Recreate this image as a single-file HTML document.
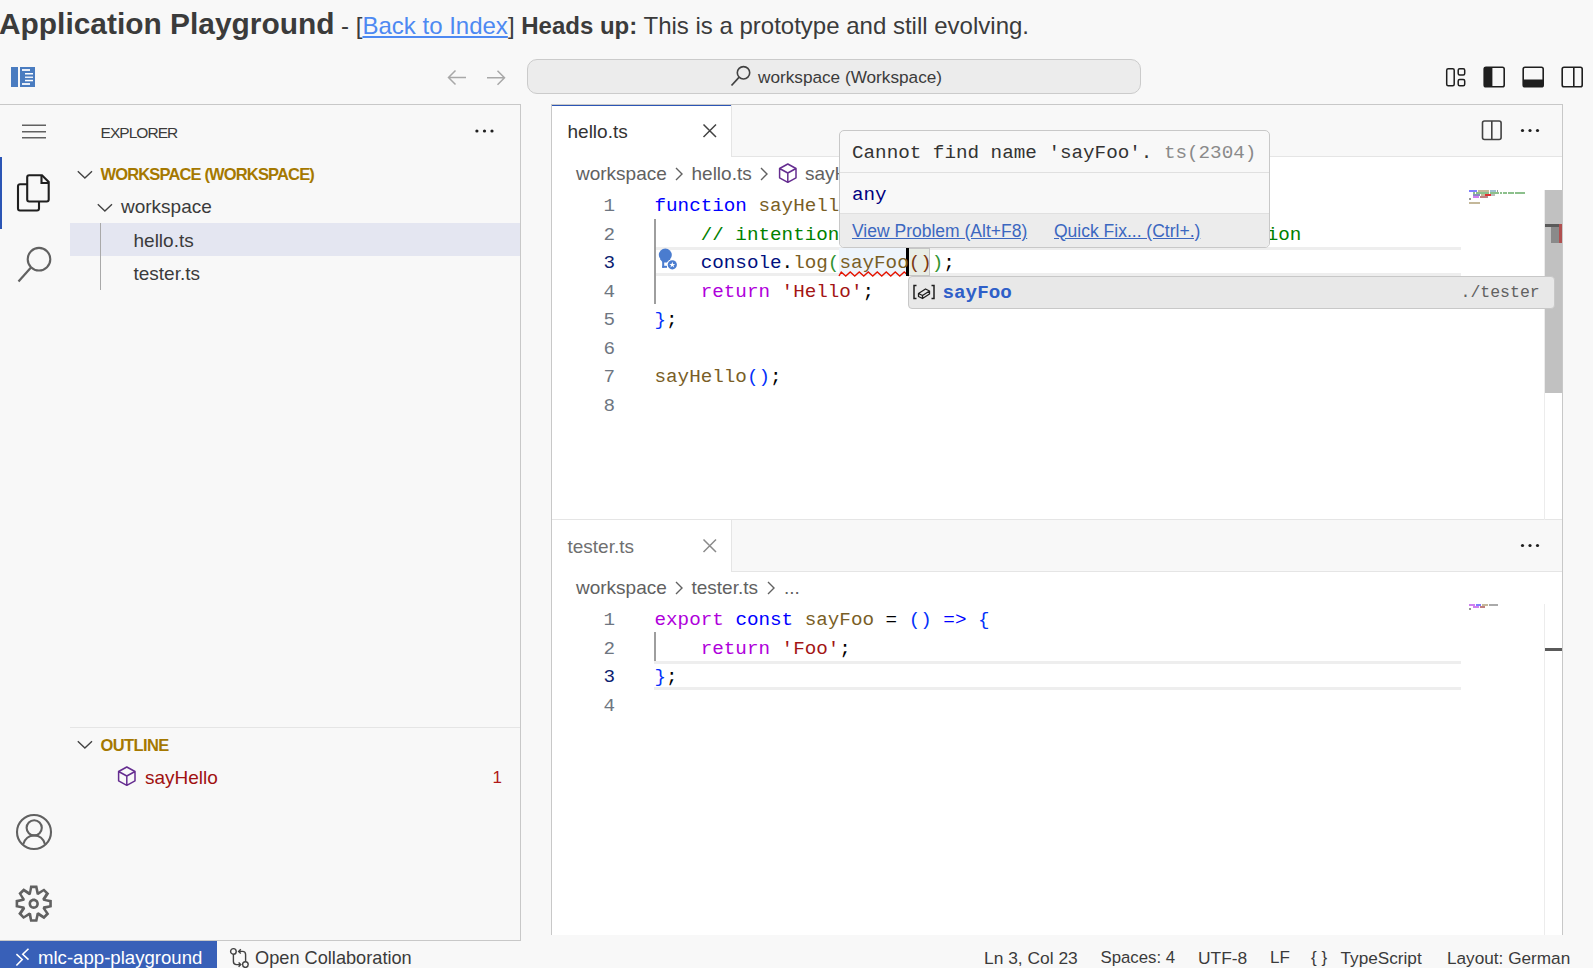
<!DOCTYPE html>
<html><head><meta charset="utf-8"><style>
html,body{margin:0;padding:0;}
body{width:1593px;height:968px;overflow:hidden;position:relative;background:#f8f8f8;font-family:'Liberation Sans', sans-serif;}
.t{position:absolute;white-space:pre;}
.r{position:absolute;box-sizing:content-box;}
.s{position:absolute;overflow:visible;}
.ln{margin-top:2px;left:560px;width:55px;text-align:right;font-family:'Liberation Mono', monospace;font-size:19.25px;line-height:28.5px;}
.code{margin-top:2px;z-index:2;left:654.5px;font-family:'Liberation Mono', monospace;font-size:19.25px;line-height:28.5px;color:#000;}
</style></head><body>
<div class="t" style="left:-1px;top:8.60px;line-height:30px;font-size:24px;color:#3b3b3b;font-family:'Liberation Sans', sans-serif"><b style="font-size:29.9px">Application Playground</b> - [<a style="color:#4d89f2;text-decoration:underline">Back to Index</a>] <b>Heads up:</b> This is a prototype and still evolving.</div>
<svg class="s" style="left:11px;top:67px;" width="25" height="20" viewBox="0 0 25 20"><rect x="0" y="0" width="7" height="20" fill="#4a7cc0"/><rect x="9" y="0" width="15" height="20" fill="#4a7cc0"/><rect x="11" y="2" width="8" height="2" fill="#e8eef8"/><rect x="14" y="6" width="8" height="1.5" fill="#fff"/><rect x="14" y="9.5" width="8" height="1.5" fill="#e8eef8"/><rect x="14" y="12.8" width="8" height="1.5" fill="#fff"/><rect x="11" y="16" width="8" height="2" fill="#e8eef8"/></svg>
<svg class="s" style="left:446px;top:68px;" width="22" height="20" viewBox="0 0 22 20"><path d="M20 9.5H3 M9.5 2.5L2.5 9.5L9.5 16.5" stroke="#a8a8a8" stroke-width="1.5" fill="none"/></svg>
<svg class="s" style="left:485px;top:68px;" width="22" height="20" viewBox="0 0 22 20"><path d="M2 9.8H19 M12.5 2.8L19.5 9.8L12.5 16.8" stroke="#a8a8a8" stroke-width="1.5" fill="none"/></svg>
<div class="r" style="left:527px;top:59px;width:612px;height:33px;background:#ececec;border:1px solid #cbcbcb;border-radius:10px;"></div>
<svg class="s" style="left:730px;top:65px;" width="22" height="23" viewBox="0 0 22 23"><circle cx="13.5" cy="7.8" r="6.2" stroke="#424242" stroke-width="1.6" fill="none"/><path d="M9.2 12.2L1.5 20.5" stroke="#424242" stroke-width="1.7"/></svg>
<div class="t" style="left:758.00px;top:65.74px;font-size:17.2px;line-height:22px;color:#3b3b3b;font-weight:normal;font-family:'Liberation Sans', sans-serif;">workspace (Workspace)</div>
<svg class="s" style="left:1445px;top:67px;" width="22" height="20" viewBox="0 0 22 20"><rect x="1.7" y="1.7" width="7.5" height="17" rx="1.5" stroke="#1f1f1f" stroke-width="1.5" fill="none"/><rect x="13.2" y="1.7" width="6.5" height="6.2" rx="1.5" stroke="#1f1f1f" stroke-width="1.5" fill="none"/><rect x="13.2" y="12.5" width="6.5" height="6.2" rx="1.5" stroke="#1f1f1f" stroke-width="1.5" fill="none"/></svg>
<svg class="s" style="left:1483px;top:66px;" width="23" height="22" viewBox="0 0 23 22"><rect x="1.2" y="1.2" width="20" height="19.5" rx="1.8" stroke="#1f1f1f" stroke-width="1.6" fill="none"/><rect x="1.2" y="1.2" width="8.2" height="19.5" fill="#1f1f1f"/></svg>
<svg class="s" style="left:1522px;top:66px;" width="23" height="22" viewBox="0 0 23 22"><rect x="1.2" y="1.2" width="20" height="19.5" rx="1.8" stroke="#1f1f1f" stroke-width="1.6" fill="none"/><rect x="1.2" y="13.5" width="20" height="7.2" fill="#1f1f1f"/></svg>
<svg class="s" style="left:1561px;top:66px;" width="23" height="22" viewBox="0 0 23 22"><rect x="1.2" y="1.2" width="20" height="19.5" rx="1.8" stroke="#1f1f1f" stroke-width="1.6" fill="none"/><path d="M12.8 1.2V20.7" stroke="#1f1f1f" stroke-width="1.6"/></svg>
<div class="r" style="left:0px;top:104px;width:521px;height:1px;background:#c8c8c8;"></div>
<div class="r" style="left:520px;top:104px;width:1px;height:837px;background:#c8c8c8;"></div>
<div class="r" style="left:0px;top:940px;width:521px;height:1px;background:#c8c8c8;"></div>
<svg class="s" style="left:20px;top:122px;" width="28" height="20" viewBox="0 0 28 20"><path d="M2 3.3H26 M2 9.7H26 M2 15.8H26" stroke="#616161" stroke-width="1.6"/></svg>
<div class="r" style="left:0px;top:157px;width:1.5px;height:72px;background:#2b55b5;"></div>
<svg class="s" style="left:15px;top:172px;" width="38" height="42" viewBox="0 0 38 42"><path d="M12.5 12.2H5A2 2 0 0 0 3 14.2V36.5A2 2 0 0 0 5 38.5H22A2 2 0 0 0 24 36.5V30" stroke="#1f1f1f" stroke-width="2.1" fill="none"/><path d="M14.2 3.3H27L33.7 10V27.5A2 2 0 0 1 31.7 29.5H14.2A2 2 0 0 1 12.2 27.5V5.3A2 2 0 0 1 14.2 3.3Z" stroke="#1f1f1f" stroke-width="2.1" fill="none"/><path d="M26.5 3.5V11H33.5" stroke="#1f1f1f" stroke-width="2.1" fill="none"/></svg>
<svg class="s" style="left:14px;top:242px;" width="42" height="44" viewBox="0 0 42 44"><circle cx="25" cy="17.2" r="11.3" stroke="#616161" stroke-width="2.1" fill="none"/><path d="M17.2 25.2L4.5 39.5" stroke="#616161" stroke-width="2.2"/></svg>
<svg class="s" style="left:14px;top:812px;" width="40" height="40" viewBox="0 0 40 40"><circle cx="20" cy="20" r="17" stroke="#616161" stroke-width="2.1" fill="none"/><circle cx="20.2" cy="15.8" r="7.6" stroke="#616161" stroke-width="2.1" fill="none"/><path d="M9.2 32.3C11 26.5 15 23.5 20.2 23.5C25.4 23.5 29.4 26.5 31 32.3" stroke="#616161" stroke-width="2.1" fill="none"/></svg>
<svg class="s" style="left:13.3px;top:883px;" width="42" height="42" viewBox="0 0 42 42"><g transform="scale(2.59)"><path fill-rule="evenodd" fill="#616161" d="M9.1 4.4L8.6 2H7.4l-.5 2.4-.7.3-2-1.3-.9.8 1.3 2-.2.7-2.4.5v1.2l2.4.5.3.8-1.3 2 .8.8 2-1.3.8.3.4 2.3h1.2l.5-2.4.8-.3 2 1.3.8-.8-1.3-2 .3-.8 2.3-.4V7.4l-2.4-.5-.3-.8 1.3-2-.8-.8-2 1.3-.7-.2zM9.4 1l.5 2.4L12 2.1l2 2-1.4 2.1 2.4.4v2.8l-2.4.5L14 12l-2 2-2.1-1.4-.5 2.4H6.6l-.5-2.4L4 13.9l-2-2 1.4-2.1L1 9.4V6.6l2.4-.5L2.1 4l2-2 2.1 1.4.4-2.4h2.8zm.6 7c0 1.1-.9 2-2 2s-2-.9-2-2 .9-2 2-2 2 .9 2 2zM8 9c.6 0 1-.4 1-1s-.4-1-1-1-1 .4-1 1 .4 1 1 1z"/></g></svg>
<div class="t" style="left:100.50px;top:122.53px;font-size:15.5px;line-height:20px;color:#3b3b3b;font-weight:normal;font-family:'Liberation Sans', sans-serif;letter-spacing:-0.95px">EXPLORER</div>
<svg class="s" style="left:472px;top:125px;" width="26" height="12" viewBox="0 0 26 12"><circle cx="4.9" cy="6" r="1.6" fill="#1f1f1f"/><circle cx="12.5" cy="6" r="1.6" fill="#1f1f1f"/><circle cx="20.0" cy="6" r="1.6" fill="#1f1f1f"/></svg>
<svg class="s" style="left:76px;top:168px;" width="18" height="12" viewBox="0 0 18 12"><path d="M1.8 3.2L8.9 10.1L16 3.2" stroke="#424242" stroke-width="1.35" fill="none"/></svg>
<div class="t" style="left:100.50px;top:163.68px;font-size:16.5px;line-height:21px;color:#a57800;font-weight:bold;font-family:'Liberation Sans', sans-serif;letter-spacing:-0.85px">WORKSPACE (WORKSPACE)</div>
<svg class="s" style="left:96px;top:201px;" width="18" height="12" viewBox="0 0 18 12"><path d="M1.8 3.2L8.9 10.1L16 3.2" stroke="#424242" stroke-width="1.35" fill="none"/></svg>
<div class="t" style="left:121.00px;top:194.11px;font-size:19px;line-height:25px;color:#3b3b3b;font-weight:normal;font-family:'Liberation Sans', sans-serif;">workspace</div>
<div class="r" style="left:70px;top:223px;width:450px;height:33px;background:#e4e6f1;"></div>
<div class="r" style="left:100px;top:223px;width:1px;height:67px;background:#a9a9a9;"></div>
<div class="t" style="left:133.50px;top:227.61px;font-size:19px;line-height:25px;color:#3b3b3b;font-weight:normal;font-family:'Liberation Sans', sans-serif;">hello.ts</div>
<div class="t" style="left:133.50px;top:260.51px;font-size:19px;line-height:25px;color:#3b3b3b;font-weight:normal;font-family:'Liberation Sans', sans-serif;">tester.ts</div>
<div class="r" style="left:70px;top:727px;width:450px;height:1px;background:#e5e5e5;"></div>
<svg class="s" style="left:76px;top:738px;" width="18" height="12" viewBox="0 0 18 12"><path d="M1.8 3.2L8.9 10.1L16 3.2" stroke="#424242" stroke-width="1.35" fill="none"/></svg>
<div class="t" style="left:100.50px;top:734.88px;font-size:16.5px;line-height:21px;color:#a57800;font-weight:bold;font-family:'Liberation Sans', sans-serif;letter-spacing:-0.6px">OUTLINE</div>
<svg class="s" style="left:116px;top:765px;" width="22" height="23" viewBox="0 0 22 23"><path d="M10.8 2L19 6.5V15.8L10.8 20.3L2.6 15.8V6.5Z M2.6 6.5L10.8 11L19 6.5 M10.8 11V20.3" stroke="#652d90" stroke-width="1.5" fill="none" stroke-linejoin="round"/></svg>
<div class="t" style="left:145.00px;top:764.51px;font-size:19px;line-height:25px;color:#a01010;font-weight:normal;font-family:'Liberation Sans', sans-serif;">sayHello</div>
<div class="t" style="left:492.50px;top:766.71px;font-size:17px;line-height:22px;color:#b01818;font-weight:normal;font-family:'Liberation Sans', sans-serif;">1</div>
<div class="r" style="left:551px;top:104px;width:1012px;height:831px;background:#ffffff;"></div>
<div class="r" style="left:551px;top:104px;width:1012px;height:1px;background:#c8c8c8;"></div>
<div class="r" style="left:551px;top:104px;width:1px;height:831px;background:#c8c8c8;"></div>
<div class="r" style="left:1562px;top:104px;width:1px;height:831px;background:#c8c8c8;"></div>
<div class="r" style="left:552px;top:105px;width:1010px;height:52px;background:#f8f8f8;"></div>
<div class="r" style="left:552px;top:156px;width:1010px;height:1px;background:#e5e5e5;"></div>
<div class="r" style="left:552px;top:105px;width:179px;height:52px;background:#ffffff;"></div>
<div class="r" style="left:731px;top:105px;width:1px;height:52px;background:#e5e5e5;"></div>
<div class="r" style="left:552px;top:105px;width:179px;height:1px;background:#2b55b5;"></div>
<div class="t" style="left:567.50px;top:118.91px;font-size:19px;line-height:25px;color:#333333;font-weight:normal;font-family:'Liberation Sans', sans-serif;">hello.ts</div>
<svg class="s" style="left:701px;top:123px;" width="17" height="15" viewBox="0 0 17 15"><path d="M2.5 1.5L15 14 M15 1.5L2.5 14" stroke="#424242" stroke-width="1.5"/></svg>
<svg class="s" style="left:1480px;top:119px;" width="24" height="22" viewBox="0 0 24 22"><rect x="2.5" y="2" width="18.6" height="18.5" rx="2" stroke="#424242" stroke-width="1.6" fill="none"/><path d="M11.8 2V20.5" stroke="#424242" stroke-width="1.6"/></svg>
<svg class="s" style="left:1517px;top:124px;" width="26" height="12" viewBox="0 0 26 12"><circle cx="5.5" cy="6.5" r="1.6" fill="#1f1f1f"/><circle cx="13" cy="6.5" r="1.6" fill="#1f1f1f"/><circle cx="20.5" cy="6.5" r="1.6" fill="#1f1f1f"/></svg>

<div class="r" style="left:654px;top:247.0px;width:807px;height:22.5px;border-top:3px solid #eeeeee;border-bottom:3px solid #eeeeee"></div>
<div class="t ln" style="top:190.0px;color:#6e7681">1</div>
<div class="t code" style="top:190.0px"><span style="color:#0000ff">function</span> <span style="color:#795e26">sayHello</span><span style="color:#0431fa">()</span><span style="color:#000">: </span><span style="color:#267f99">string</span> <span style="color:#0431fa">{</span></div>
<div class="t ln" style="top:218.5px;color:#6e7681">2</div>
<div class="t code" style="top:218.5px">    <span style="color:#008000">// intentionally reference to test import suggestion</span></div>
<div class="t ln" style="top:247.0px;color:#0b216f">3</div>
<div class="t code" style="top:247.0px">    <span style="color:#001080">console</span><span style="color:#000">.</span><span style="color:#795e26">log</span><span style="color:#319331">(</span><span style="color:#795e26">sayFoo</span><span style="color:#7b3814">()</span><span style="color:#319331">)</span><span style="color:#000">;</span></div>
<div class="t ln" style="top:275.5px;color:#6e7681">4</div>
<div class="t code" style="top:275.5px">    <span style="color:#af00db">return</span> <span style="color:#a31515">'Hello'</span><span style="color:#000">;</span></div>
<div class="t ln" style="top:304.0px;color:#6e7681">5</div>
<div class="t code" style="top:304.0px"><span style="color:#0431fa">}</span><span style="color:#000">;</span></div>
<div class="t ln" style="top:332.5px;color:#6e7681">6</div>
<div class="t code" style="top:332.5px"></div>
<div class="t ln" style="top:361.0px;color:#6e7681">7</div>
<div class="t code" style="top:361.0px"><span style="color:#795e26">sayHello</span><span style="color:#0431fa">()</span><span style="color:#000">;</span></div>
<div class="t ln" style="top:389.5px;color:#6e7681">8</div>
<div class="t code" style="top:389.5px"></div>
<div class="r" style="left:552px;top:520px;width:1010px;height:52px;background:#f8f8f8;"></div>
<div class="r" style="left:552px;top:571px;width:1010px;height:1px;background:#e5e5e5;"></div>
<div class="r" style="left:552px;top:520px;width:179px;height:52px;background:#ffffff;"></div>
<div class="r" style="left:731px;top:520px;width:1px;height:52px;background:#e5e5e5;"></div>
<div class="t" style="left:567.50px;top:533.91px;font-size:19px;line-height:25px;color:#6f6f6f;font-weight:normal;font-family:'Liberation Sans', sans-serif;">tester.ts</div>
<svg class="s" style="left:701px;top:538px;" width="17" height="15" viewBox="0 0 17 15"><path d="M2.5 1.5L15 14 M15 1.5L2.5 14" stroke="#8a8a8a" stroke-width="1.5"/></svg>
<svg class="s" style="left:1517px;top:539px;" width="26" height="12" viewBox="0 0 26 12"><circle cx="5.5" cy="6.5" r="1.6" fill="#1f1f1f"/><circle cx="13" cy="6.5" r="1.6" fill="#1f1f1f"/><circle cx="20.5" cy="6.5" r="1.6" fill="#1f1f1f"/></svg>

<div class="r" style="left:654px;top:661.0px;width:807px;height:22.5px;border-top:3px solid #eeeeee;border-bottom:3px solid #eeeeee"></div>
<div class="t ln" style="top:604.0px;color:#6e7681">1</div>
<div class="t code" style="top:604.0px"><span style="color:#af00db">export</span> <span style="color:#0000ff">const</span> <span style="color:#795e26">sayFoo</span><span style="color:#000"> = </span><span style="color:#0431fa">()</span> <span style="color:#0000ff">=&gt;</span> <span style="color:#0431fa">{</span></div>
<div class="t ln" style="top:632.5px;color:#6e7681">2</div>
<div class="t code" style="top:632.5px">    <span style="color:#af00db">return</span> <span style="color:#a31515">'Foo'</span><span style="color:#000">;</span></div>
<div class="t ln" style="top:661.0px;color:#0b216f">3</div>
<div class="t code" style="top:661.0px"><span style="color:#0431fa">}</span><span style="color:#000">;</span></div>
<div class="t ln" style="top:689.5px;color:#6e7681">4</div>
<div class="t code" style="top:689.5px"></div>
<div class="r" style="left:552px;top:519px;width:1010px;height:1px;background:#e5e5e5;"></div>
<div class="t" style="left:576.00px;top:161.31px;font-size:19px;line-height:25px;color:#616161;font-weight:normal;font-family:'Liberation Sans', sans-serif;">workspace</div>
<svg class="s" style="left:674px;top:166px;" width="10" height="16" viewBox="0 0 10 16"><path d="M2 2L8 8L2 14" stroke="#616161" stroke-width="1.4" fill="none"/></svg>
<div class="t" style="left:691.50px;top:161.31px;font-size:19px;line-height:25px;color:#616161;font-weight:normal;font-family:'Liberation Sans', sans-serif;">hello.ts</div>
<svg class="s" style="left:759px;top:166px;" width="10" height="16" viewBox="0 0 10 16"><path d="M2 2L8 8L2 14" stroke="#616161" stroke-width="1.4" fill="none"/></svg>
<svg class="s" style="left:777px;top:162px;" width="22" height="23" viewBox="0 0 22 23"><path d="M10.8 2L19 6.5V15.8L10.8 20.3L2.6 15.8V6.5Z M2.6 6.5L10.8 11L19 6.5 M10.8 11V20.3" stroke="#652d90" stroke-width="1.5" fill="none" stroke-linejoin="round"/></svg>
<div class="t" style="left:805.00px;top:161.31px;font-size:19px;line-height:25px;color:#616161;font-weight:normal;font-family:'Liberation Sans', sans-serif;">sayHello</div>
<div class="t" style="left:576.00px;top:575.41px;font-size:19px;line-height:25px;color:#616161;font-weight:normal;font-family:'Liberation Sans', sans-serif;">workspace</div>
<svg class="s" style="left:674px;top:580px;" width="10" height="16" viewBox="0 0 10 16"><path d="M2 2L8 8L2 14" stroke="#616161" stroke-width="1.4" fill="none"/></svg>
<div class="t" style="left:691.50px;top:575.41px;font-size:19px;line-height:25px;color:#616161;font-weight:normal;font-family:'Liberation Sans', sans-serif;">tester.ts</div>
<svg class="s" style="left:766px;top:580px;" width="10" height="16" viewBox="0 0 10 16"><path d="M2 2L8 8L2 14" stroke="#616161" stroke-width="1.4" fill="none"/></svg>
<div class="t" style="left:784.00px;top:575.41px;font-size:19px;line-height:25px;color:#616161;font-weight:normal;font-family:'Liberation Sans', sans-serif;">...</div>
<div class="r" style="left:654px;top:219px;width:1.5px;height:85px;background:#9e9e9e;"></div>
<div class="r" style="left:654px;top:632px;width:1.5px;height:28.5px;background:#9e9e9e;"></div>
<div class="r" style="left:839px;top:247.5px;width:67px;height:28.5px;background:#eef4fb;"></div>
<div class="r" style="left:906px;top:247.5px;width:24px;height:28.5px;background:#e9ede5;border:1.5px solid #c6c6c6;box-sizing:border-box"></div>
<svg class="s" style="left:839px;top:270.5px;" width="68" height="6" viewBox="0 0 68 6"><path d="M0 5 L2.25 1 L6.75 5 L11.25 1 L15.75 5 L20.25 1 L24.75 5 L29.25 1 L33.75 5 L38.25 1 L42.75 5 L47.25 1 L51.75 5 L56.25 1 L60.75 5 L65.25 1 L69.75 5" stroke="#e51400" stroke-width="1.4" fill="none" stroke-linejoin="miter"/></svg>
<div class="r" style="left:906px;top:248px;width:3px;height:27.5px;background:#000000;"></div>
<svg class="s" style="left:656px;top:247px;" width="26" height="28" viewBox="0 0 26 28"><circle cx="9.3" cy="8" r="6.5" fill="#4a7ccf"/><path d="M4 12L14.6 12L11.2 15.6H6.7Z" fill="#4a7ccf"/><rect x="6.2" y="14.5" width="2" height="6.3" fill="#4a7ccf"/><rect x="6.2" y="18.8" width="4.8" height="2" fill="#4a7ccf"/><circle cx="16.3" cy="17.8" r="5.6" fill="#ffffff"/><circle cx="16.3" cy="17.8" r="4.6" fill="#4a7ccf"/><path d="M16.3 14.8L17.1 16.9H19.3L17.5 18.2L18.2 20.4L16.3 19.1L14.4 20.4L15.1 18.2L13.3 16.9H15.5Z" fill="#fff"/></svg>
<div class="r" style="left:1469px;top:190px;width:8px;height:2px;background:#8080ff;"></div>
<div class="r" style="left:1478px;top:190px;width:11px;height:2px;background:#c4b89a;"></div>
<div class="r" style="left:1490px;top:190px;width:6px;height:2px;background:#9fbfd0;"></div>
<div class="r" style="left:1497px;top:190px;width:1px;height:2px;background:#999;"></div>
<div class="r" style="left:1473px;top:192px;width:2px;height:2px;background:#8cc08c;"></div>
<div class="r" style="left:1476px;top:192px;width:13px;height:2px;background:#8cc08c;"></div>
<div class="r" style="left:1490px;top:192px;width:9px;height:2px;background:#8cc08c;"></div>
<div class="r" style="left:1500px;top:192px;width:2px;height:2px;background:#8cc08c;"></div>
<div class="r" style="left:1503px;top:192px;width:4px;height:2px;background:#8cc08c;"></div>
<div class="r" style="left:1508px;top:192px;width:6px;height:2px;background:#8cc08c;"></div>
<div class="r" style="left:1515px;top:192px;width:10px;height:2px;background:#8cc08c;"></div>
<div class="r" style="left:1473px;top:194px;width:7px;height:2px;background:#8c8cc0;"></div>
<div class="r" style="left:1481px;top:194px;width:4px;height:2px;background:#c4b89a;"></div>
<div class="r" style="left:1485px;top:194px;width:6px;height:2px;background:#e03030;"></div>
<div class="r" style="left:1491px;top:194px;width:4px;height:2px;background:#bbb;"></div>
<div class="r" style="left:1473px;top:196px;width:6px;height:2px;background:#d080f0;"></div>
<div class="r" style="left:1480px;top:196px;width:7px;height:2px;background:#c08080;"></div>
<div class="r" style="left:1487px;top:196px;width:1px;height:2px;background:#999;"></div>
<div class="r" style="left:1469px;top:198px;width:2px;height:2px;background:#999;"></div>
<div class="r" style="left:1469px;top:202px;width:11px;height:2px;background:#c4b89a;"></div>
<div class="r" style="left:1469px;top:604px;width:6px;height:2px;background:#d080f0;"></div>
<div class="r" style="left:1476px;top:604px;width:5px;height:2px;background:#8080ff;"></div>
<div class="r" style="left:1482px;top:604px;width:6px;height:2px;background:#c4b89a;"></div>
<div class="r" style="left:1489px;top:604px;width:9px;height:2px;background:#aaa;"></div>
<div class="r" style="left:1473px;top:606px;width:6px;height:2px;background:#d080f0;"></div>
<div class="r" style="left:1480px;top:606px;width:5px;height:2px;background:#c08080;"></div>
<div class="r" style="left:1469px;top:608px;width:2px;height:2px;background:#999;"></div>
<div class="r" style="left:1544px;top:190px;width:1px;height:330px;background:#ececec;"></div>
<div class="r" style="left:1545px;top:190px;width:17px;height:203px;background:#c1c1c1;"></div>
<div class="r" style="left:1545px;top:224px;width:17px;height:3px;background:#5a5a5a;"></div>
<div class="r" style="left:1551px;top:227px;width:8px;height:16px;background:#8a8a8a;"></div>
<div class="r" style="left:1559px;top:224px;width:3px;height:19px;background:#b05050;"></div>
<div class="r" style="left:1544px;top:604px;width:1px;height:331px;background:#ececec;"></div>
<div class="r" style="left:1545px;top:648px;width:17px;height:3px;background:#5a5a5a;"></div>
<div style="position:absolute;left:0;top:0;z-index:5">
<div class="r" style="left:839px;top:130px;width:429px;height:116px;background:#f8f8f8;border:1px solid #c8c8c8;border-radius:5px;overflow:hidden"><div class="r" style="left:0;top:41px;width:429px;height:1px;background:#e0e0e0"></div><div class="r" style="left:0;top:82px;width:429px;height:34px;background:#ececec;border-top:1px solid #e0e0e0"></div></div>
<div class="t" style="left:852.00px;top:140.78px;font-size:19.25px;line-height:25px;color:#333333;font-weight:normal;font-family:'Liberation Mono', monospace;">Cannot find name 'sayFoo'. <span style="color:#8a8a8a">ts(2304)</span></div>
<div class="t" style="left:852.00px;top:182.68px;font-size:19.25px;line-height:25px;color:#000080;font-weight:normal;font-family:'Liberation Mono', monospace;">any</div>
<div class="t" style="left:852.00px;top:219.73px;font-size:17.5px;line-height:23px;color:#3b67c0;font-weight:normal;font-family:'Liberation Sans', sans-serif;"><u>View Problem (Alt+F8)</u></div>
<div class="t" style="left:1054.00px;top:219.73px;font-size:17.5px;line-height:23px;color:#3b67c0;font-weight:normal;font-family:'Liberation Sans', sans-serif;"><u>Quick Fix... (Ctrl+.)</u></div>
<div class="r" style="left:908px;top:276px;width:645px;height:31px;background:#e8e8e8;border:1px solid #c8c8c8;border-radius:4px"></div>
<svg class="s" style="left:912px;top:284px;" width="24" height="16" viewBox="0 0 24 16"><path d="M4.5 1.5H2V14.5H4.5 M19.5 1.5H22V14.5H19.5" stroke="#1f1f1f" stroke-width="1.5" fill="none"/><path d="M6.5 9.5L13.5 5L17.5 7V10L10.5 14.5L6.5 12.5Z M6.5 9.5L10.5 11.5L17.5 7 M10.5 11.5V14.5" stroke="#1f1f1f" stroke-width="1.3" fill="none" stroke-linejoin="round"/></svg>
<div class="t" style="left:942.50px;top:280.68px;font-size:19.25px;line-height:25px;color:#2f5fc8;font-weight:bold;font-family:'Liberation Mono', monospace;">sayFoo</div>
<div class="t" style="left:1460.50px;top:281.81px;font-size:16.5px;line-height:21px;color:#616161;font-weight:normal;font-family:'Liberation Mono', monospace;">./tester</div>
</div>
<div class="r" style="left:0px;top:941px;width:217px;height:27px;background:#3860b8;"></div>
<svg class="s" style="left:10px;top:943px;" width="24" height="25" viewBox="0 0 24 25"><path d="M6.4 11.2L12.2 16.5L6.4 22.5 M18.5 5.7L12.75 11.3L18.5 16.7" stroke="#ffffff" stroke-width="1.6" fill="none"/></svg>
<div class="t" style="left:38.00px;top:945.85px;font-size:18.6px;line-height:24px;color:#ffffff;font-weight:normal;font-family:'Liberation Sans', sans-serif;">mlc-app-playground</div>
<svg class="s" style="left:226px;top:944px;" width="26" height="26" viewBox="0 0 26 26"><circle cx="7.4" cy="7.4" r="2.8" stroke="#424242" stroke-width="1.4" fill="none"/><circle cx="19.4" cy="20.6" r="2.8" stroke="#424242" stroke-width="1.4" fill="none"/><path d="M7.4 10.2V17.5Q7.4 20.6 10.5 20.6H14.5 M12.6 18.4L14.8 20.6L12.6 22.8 M19.6 17.8V10.5Q19.6 7.4 16.5 7.4H12.8 M14.8 5.2L12.6 7.4L14.8 9.6" stroke="#424242" stroke-width="1.4" fill="none"/></svg>
<div class="t" style="left:255.00px;top:945.99px;font-size:18.2px;line-height:24px;color:#3b3b3b;font-weight:normal;font-family:'Liberation Sans', sans-serif;">Open Collaboration</div>
<div class="t" style="left:984.00px;top:946.77px;font-size:17.4px;line-height:23px;color:#3b3b3b;font-weight:normal;font-family:'Liberation Sans', sans-serif;">Ln 3, Col 23</div>
<div class="t" style="left:1100.50px;top:947.48px;font-size:16.8px;line-height:22px;color:#3b3b3b;font-weight:normal;font-family:'Liberation Sans', sans-serif;">Spaces: 4</div>
<div class="t" style="left:1198.00px;top:946.77px;font-size:17.4px;line-height:23px;color:#3b3b3b;font-weight:normal;font-family:'Liberation Sans', sans-serif;">UTF-8</div>
<div class="t" style="left:1270.00px;top:947.41px;font-size:17px;line-height:22px;color:#3b3b3b;font-weight:normal;font-family:'Liberation Sans', sans-serif;">LF</div>
<div class="t" style="left:1311.00px;top:947.41px;font-size:17px;line-height:22px;color:#3b3b3b;font-weight:normal;font-family:'Liberation Sans', sans-serif;">{ }</div>
<div class="t" style="left:1340.50px;top:947.34px;font-size:17.2px;line-height:22px;color:#3b3b3b;font-weight:normal;font-family:'Liberation Sans', sans-serif;">TypeScript</div>
<div class="t" style="left:1447.00px;top:947.34px;font-size:17.2px;line-height:22px;color:#3b3b3b;font-weight:normal;font-family:'Liberation Sans', sans-serif;">Layout: German</div>
</body></html>
